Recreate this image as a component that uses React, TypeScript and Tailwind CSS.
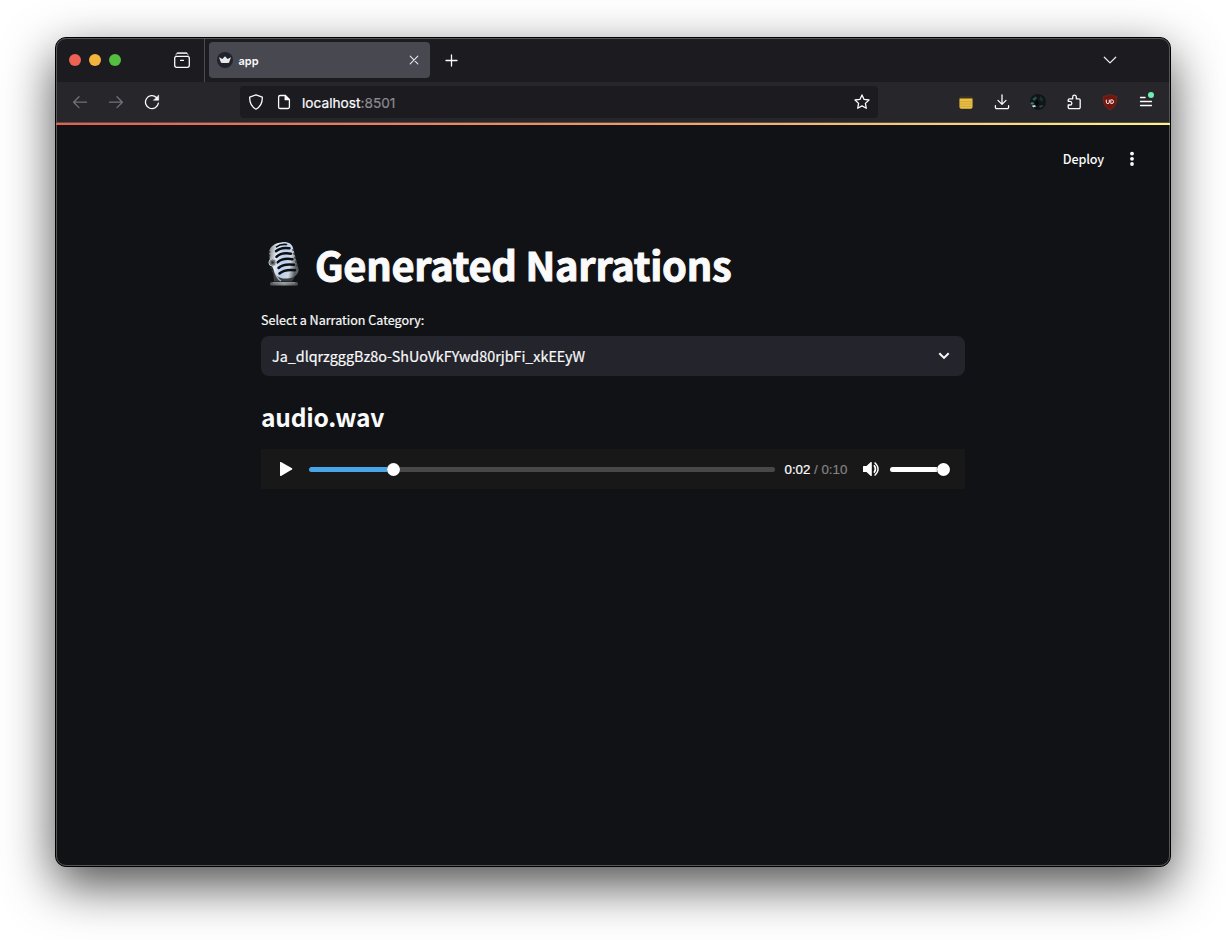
import React from "react";

const stroke = {
  fill: "none",
  stroke: "currentColor",
  strokeWidth: 1.3,
  strokeLinecap: "round" as const,
  strokeLinejoin: "round" as const,
};

function Slot({ children, className = "text-[#fbfbfe]" }: { children: React.ReactNode; className?: string }) {
  return <div className={`relative flex h-8 w-9 items-center justify-center ${className}`}>{children}</div>;
}

function Icon({ children }: { children: React.ReactNode }) {
  return (
    <svg width="16" height="16" viewBox="0 0 16 16" {...stroke}>
      {children}
    </svg>
  );
}

function Microphone() {
  return (
    <svg width="44" height="48" viewBox="0 0 44 48">
      <defs>
        <linearGradient id="mic-body" x1="0" y1="0" x2="1" y2="0.2">
          <stop offset="0" stopColor="#6c7276" />
          <stop offset="0.3" stopColor="#e6edf5" />
          <stop offset="0.55" stopColor="#b8cdf0" />
          <stop offset="0.8" stopColor="#ced9e6" />
          <stop offset="1" stopColor="#5b6064" />
        </linearGradient>
        <linearGradient id="mic-base" x1="0" y1="0" x2="1" y2="0">
          <stop offset="0" stopColor="#4d5052" />
          <stop offset="0.5" stopColor="#8f9496" />
          <stop offset="1" stopColor="#4a4d4f" />
        </linearGradient>
      </defs>
      <path d="M11.500 27 13 41.500H31L36 33Z" fill="#3a3e41" />
      <path d="M13.500 30Q15 38 20 41" fill="none" stroke="#a4aaad" strokeWidth="1.400" />
      <path d="M8 12C9 6 14 3 21 2.200 27.500 1.600 31 4 32 8L37.500 29C38 34.500 33 38 26 38.500 18.500 39 14.500 36 13 30.500L9 22Z" fill="url(#mic-body)" />
      <g fill="none" stroke="#0c0e11" strokeWidth="2.500" strokeLinecap="round">
        <path d="M15.500 6.800Q19 3.800 25.500 4.500" strokeWidth="1.600" />
        <path d="M15 11.200Q20 6.800 28.500 8.300" />
        <path d="M15.500 16.800Q20 12.300 30 13.700" />
        <path d="M16.500 22.400Q21.500 17.700 31.500 19.200" />
        <path d="M17.500 28Q22.500 23.300 33 24.800" />
        <path d="M18.500 33.500Q24 28.800 34 30.200" />
      </g>
      <path d="M32 9 37 29" stroke="#34383b" strokeWidth="1.600" strokeDasharray="2 2" />
      <path d="M8.500 11V17M10 27 12 33" stroke="#34383b" strokeWidth="1.500" strokeDasharray="2 1.500" />
      <circle cx="11.500" cy="22.500" r="3.600" fill="#6f7578" stroke="#bdc3c7" strokeWidth="1" />
      <circle cx="11.500" cy="22.500" r="1.300" fill="#2a2c2e" />
      <rect x="9" y="42" width="28" height="3.600" rx="1.700" fill="url(#mic-base)" />
      <path d="M12 42.800h22" stroke="#a8adaf" strokeWidth="0.700" />
    </svg>
  );
}

function TabBar() {
  return (
    <div className="flex h-11 w-full items-center bg-[#1c1b20]">
      <div className="flex w-[107px] gap-2 pl-[13px]">
        <span className="size-3 rounded-full bg-[#ec6353]" />
        <span className="size-3 rounded-full bg-[#f2b43d]" />
        <span className="size-3 rounded-full bg-[#54be41]" />
      </div>
      <div className="flex w-[41px] justify-end pr-[14px] text-[#fbfbfe]">
        <svg width="18" height="18" viewBox="0 0 18 18" {...stroke} className="-mr-px shrink-0">
          <path d="M2.800 4.200Q3 2.100 4.600 2.100H13.400Q15 2.100 15.200 4.200" strokeWidth="0.700" />
          <path d="M4.300 2.100h9.400" />
          <rect x="1.700" y="5.300" width="14.600" height="11" rx="2" />
          <path d="M7.600 9.400h2.800" />
        </svg>
      </div>
      <div className="h-11 w-px bg-[#4b4a50]" />
      <div className="ml-1 flex h-9 w-[221px] items-center rounded bg-[#484851] pl-2 pr-2">
        <svg width="16" height="16" viewBox="0 0 16 16">
          <circle cx="8" cy="8" r="8" fill="#20232b" />
          <path d="M2 5.300 5.400 7 8 4.300 10.600 7 14 5.300 12 10.700Q8 11.500 4 10.700Z" fill="#e9e9ec" />
        </svg>
        <span className="ml-[5.5px] flex-1 pt-0.5 font-['Inter'] text-[11px] font-semibold leading-4 text-[#fbfbfe]">app</span>
        <svg width="16" height="16" viewBox="0 0 16 16" {...stroke} strokeWidth={1.1} className="text-[#e8e8ec]">
          <path d="m4.200 4.200 7.600 7.600m0-7.600-7.600 7.600" />
        </svg>
      </div>
      <svg width="16" height="16" viewBox="0 0 16 16" {...stroke} className="ml-[14px] text-[#fbfbfe]">
        <path d="M7.500 3v11M2 8.500h11" />
      </svg>
      <svg width="16" height="16" viewBox="0 0 16 16" {...stroke} className="ml-auto mr-[52px] text-[#e8e8ec]">
        <path d="m2.300 5.300 5.700 5.600 5.700-5.600" />
      </svg>
    </div>
  );
}

function Toolbar() {
  return (
    <div className="flex h-10 w-full items-center bg-[#27262b] px-1.5">
      <Slot className="text-[#727178]">
        <Icon>
          <path d="M14.500 8.200H1.800M7 2.800 1.600 8.200 7 13.600" />
        </Icon>
      </Slot>
      <Slot className="text-[#727178]">
        <Icon>
          <path d="M1.500 8.200h12.700M9 2.800l5.400 5.400L9 13.600" />
        </Icon>
      </Slot>
      <Slot>
        <Icon>
          <path d="M14.400 9.200A6.500 6.500 0 1 1 12.400 3.400" />
          <path d="M14.700 1.300v5H9.700Z" fill="currentColor" strokeWidth="0.500" />
        </Icon>
      </Slot>
      <div className="ml-[70px] flex h-8 w-[638px] items-center rounded bg-[#1c1b20] px-2 text-[#fbfbfe]">
        <Icon>
          <path d="M8 .9 14.300 3.200C14.500 8.500 12.400 12.700 8 15.200 3.600 12.700 1.500 8.500 1.700 3.200Z" />
        </Icon>
        <span className="ml-3">
          <Icon>
            <path d="M9.200 1.500H4.200a1.600 1.600 0 0 0-1.600 1.600v9.800a1.600 1.600 0 0 0 1.600 1.600h7.600a1.600 1.600 0 0 0 1.600-1.600V5.700Z" />
            <path d="M9.200 1.500v4.200h4.200Z" fill="currentColor" />
          </Icon>
        </span>
        <span className="ml-2.5 flex-1 pt-px font-['Inter'] text-[13.700px] leading-5 [-webkit-text-stroke:0.200px]">
          localhost<span className="text-[#8b8a90]">:8501</span>
        </span>
        <Icon>
          <path d="m8 .9 2.100 4.500 4.900.6-3.600 3.400.9 4.900L8 11.900l-4.300 2.400.9-4.900L1 6l4.900-.6Z" />
        </Icon>
      </div>
      <div className="ml-auto flex">
        <Slot>
          <svg width="14" height="13" viewBox="0 0 14 13">
            <rect x="0.300" y="0.300" width="13.400" height="12.400" rx="2" fill="#3c3420" />
            <path d="M.5 2.600h13V11a1.700 1.700 0 0 1-1.700 1.700H2.200A1.700 1.700 0 0 1 .5 11Z" fill="#ecc042" />
            <path d="M.5 5.600h13M.5 8h13M.5 10.400h13" stroke="#c99d35" strokeWidth="0.700" />
          </svg>
        </Slot>
        <Slot>
          <Icon>
            <path d="M8 .8v9.400M4 6.400l4 4 4-4M1.400 11.700v1.600a1.300 1.300 0 0 0 1.300 1.300h10.600a1.300 1.300 0 0 0 1.300-1.300v-1.600" />
          </Icon>
        </Slot>
        <Slot>
          <svg width="16" height="16" viewBox="0 0 16 16">
            <circle cx="8" cy="8" r="8" fill="#0e1617" />
            <path d="M2.200 5 5.500 2.200 7 4.500 4 7Z" fill="#284e50" />
            <path d="M.4 9.300 2 8l2 1-.5 1.500L.8 10.600Z" fill="#4f7473" />
            <path d="M1.600 11.800 4.500 11 6.300 12.300 3.500 13.600Z" fill="#c5dedb" />
            <path d="m10 2 3 3-.5 3-3-2Z" fill="#1b3033" />
            <path d="m9 12 3-1 1.500 1L10 14Z" fill="#2b4647" />
            <path d="m7 5 2 4-2 3-2-3Z" fill="#030607" />
          </svg>
        </Slot>
        <Slot>
          <Icon>
            <path d="M2.200 11V13.300A1.300 1.300 0 0 0 3.500 14.600H12.900A1.300 1.300 0 0 0 14.200 13.300V6.100A1.300 1.300 0 0 0 12.900 4.800H10.300V2.900A1.800 1.800 0 0 0 6.700 2.900V4.800H3.500A1.300 1.300 0 0 0 2.200 6.100V7.300H4A1.850 1.850 0 0 1 4 11Z" />
          </Icon>
        </Slot>
        <Slot>
          <svg width="16" height="16" viewBox="0 0 16 16">
            <path d="M8 .2Q10.500 2.300 14.800 2.300C15 9.500 13.200 13.200 8 15.800 2.800 13.200 1 9.500 1.200 2.300Q5.500 2.300 8 .2Z" fill="#71160f" stroke="#8c332b" strokeWidth="0.500" />
            <path d="M4.300 5.700v2.400a1.500 1.500 0 0 0 3 0V5.700M8.800 5.800v3.700h.9a1.850 1.850 0 0 0 0-3.700Z" fill="none" stroke="#fff" strokeWidth="0.950" />
          </svg>
        </Slot>
        <Slot>
          <Icon>
            <path d="M2.500 3.500h4.600M2.500 7.500h11M2.500 11.500h11" />
          </Icon>
          <span className="absolute right-[10px] top-[6px] size-1.5 rounded-full bg-[#6cf0b1]" />
        </Slot>
      </div>
    </div>
  );
}

function AudioPlayer() {
  return (
    <div className="flex h-10 w-full items-center bg-[#181818]">
      <svg width="16" height="16" viewBox="0 0 16 16" className="ml-4">
        <path d="M3 1.200Q3.200.7 4 1L15 7.300Q15.700 8 15 8.600L4 14.900Q3.200 15.200 3 14.600Z" fill="#fff" />
      </svg>
      <div className="ml-4 flex h-[13px] w-[466px] items-center">
        <div className="h-[5px] w-[78px] rounded-l-full bg-[#48a6e8]" />
        <div className="size-[13px] shrink-0 rounded-full bg-white" />
        <div className="h-[5px] flex-1 rounded-r-full bg-[#484848]" />
      </div>
      <div className="ml-[9.500px] w-[63.500px] whitespace-pre pt-0.5 font-['Liberation_Sans'] text-[13.300px] leading-4 text-white [-webkit-text-stroke:0.200px]">
        0:02<span className="text-[#838383]"> / 0:10</span>
      </div>
      <svg width="18" height="16" viewBox="0 0 18 16" className="ml-[14px]">
        <path d="M1 5.400Q1 5 1.500 5H4.500L8.800 1.100Q9.700.6 9.800 1.500V14.500Q9.700 15.400 8.800 14.900L4.500 11H1.500Q1 11 1 10.500Z" fill="#fff" />
        <path d="M12 4.300Q14.800 8 12 11.700" fill="none" stroke="#fff" strokeWidth="1.800" />
        <path d="M12.600 1.500Q19.600 8 12.600 14.500" fill="none" stroke="#fff" strokeWidth="1.400" />
      </svg>
      <div className="ml-[10px] flex w-[60px] items-center">
        <div className="h-[5px] flex-1 rounded-l-full bg-white" />
        <div className="size-[13px] rounded-full bg-white shadow-[0_0_2px_rgba(0,0,0,0.6)]" />
      </div>
    </div>
  );
}

export default function App() {
  return (
    <div className="h-[940px] w-[1226px] overflow-hidden bg-white pl-[55px] pt-[37px] font-['Noto_Sans_CJK_SC',sans-serif]">
      <div className="relative h-[830px] w-[1116px] rounded-[11px] border border-black bg-[#111216] shadow-[0_18px_50px_rgba(0,0,0,0.7)]">
        <div className="flex h-full flex-col overflow-hidden rounded-[10px]">
          <TabBar />
          <Toolbar />
          <div className="h-px w-full shrink-0 bg-[#504f55]" />
          <div className="relative z-20 h-0.5 w-full shrink-0 bg-linear-to-r from-[#ec5b4b] via-[#f6965c] to-[#fff67f]" />
          <div className="flex h-[68px] items-center justify-end pr-[30px] text-[#fafafa]">
            <span className="text-[12.600px] font-medium leading-5 tracking-[-0.150px]">Deploy</span>
            <svg width="16" height="16" viewBox="0 0 16 16" className="ml-5" fill="#fafafa">
              <circle cx="8" cy="2.600" r="1.900" />
              <circle cx="8" cy="7.800" r="1.900" />
              <circle cx="8" cy="13" r="1.900" />
            </svg>
          </div>
          <main className="ml-[205px] flex w-[704px] flex-col pt-[45px] text-[#fafafa]">
            <div className="flex h-[52px] items-center">
              <Microphone />
              <h1 className="ml-[10px] whitespace-nowrap text-[39.800px] font-bold leading-[52px] tracking-[-0.250px] [-webkit-text-stroke:1px_#fafafa]">
                Generated Narrations
              </h1>
            </div>
            <div className="mt-5 h-5 text-[12.550px] leading-5 [-webkit-text-stroke:0.200px]">Select a Narration Category:</div>
            <div className="mt-[6px] flex h-10 items-center rounded-lg bg-[#24242c] pl-[11px] pr-[13px]">
              <span className="flex-1 text-[14.340px] leading-6 [-webkit-text-stroke:0.200px]">Ja_dlqrzgggBz8o-ShUoVkFYwd80rjbFi_xkEEyW</span>
              <svg width="16" height="16" viewBox="0 0 16 16" fill="none" stroke="#fafafa" strokeWidth="2">
                <path d="m3.300 5.200 4.700 4.700 4.700-4.700" />
              </svg>
            </div>
            <h2 className="mt-[23px] h-[34px] text-[24.600px] font-bold leading-[34px] tracking-[-0.250px]">audio.wav</h2>
            <div className="mt-4">
              <AudioPlayer />
            </div>
          </main>
        </div>
        <div className="pointer-events-none absolute inset-0 z-10 rounded-[10px] border border-[#55555a]" />
      </div>
    </div>
  );
}
